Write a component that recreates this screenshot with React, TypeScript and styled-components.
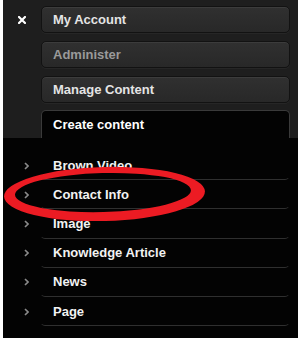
import styled, { createGlobalStyle } from "styled-components";

const GlobalStyle = createGlobalStyle`
	html, body {
		margin: 0;
		padding: 0;
		background: #ffffff;
	}
	body {
		font-family: "Liberation Sans", Arial, sans-serif;
	}
`;

const Panel = styled.div`
	position: relative;
	width: 295px;
	height: 338px;
	margin-left: 3px;
	background: #1e1e1e;
	display: flex;
	flex-direction: column;
	overflow: hidden;
`;

const Header = styled.div`
	display: grid;
	grid-template-columns: 38px 249px;
	padding-top: 6px;
`;

const CloseButton = styled.button`
	width: 38px;
	height: 27px;
	padding: 0;
	border: 0;
	background: none;
	display: flex;
	align-items: center;
	justify-content: center;
	cursor: pointer;
`;

const Menu = styled.ul`
	list-style: none;
	margin: 0;
	padding: 0;
	display: flex;
	flex-direction: column;
	gap: 8px;
`;

const MenuButton = styled.li<{ $muted?: boolean }>`
	box-sizing: border-box;
	height: 27px;
	display: flex;
	align-items: center;
	padding-left: 11px;
	border: 1px solid #121212;
	border-radius: 5px;
	background: linear-gradient(#303030, #282828);
	box-shadow: inset 0 1px 0 rgba(255, 255, 255, 0.06), 0 1px 0 rgba(255, 255, 255, 0.04);
	color: ${(p) => (p.$muted ? "#9a9a9a" : "#e4e4e4")};
	font-size: 13px;
	font-weight: bold;
`;

const ActiveTab = styled.li`
	box-sizing: border-box;
	height: 28px;
	margin-top: -1px;
	display: flex;
	align-items: center;
	padding-left: 11px;
	border: 1px solid #3a3a3a;
	border-bottom: 0;
	border-radius: 5px 5px 0 0;
	background: #030303;
	color: #ffffff;
	font-size: 13px;
	font-weight: bold;
`;

const Body = styled.div`
	flex: 1;
	background: #030303;
	padding: 13px 0 0 0;
`;

const TypeList = styled.ul`
	list-style: none;
	margin: 0;
	padding: 0;
`;

const TypeRow = styled.li`
	display: grid;
	grid-template-columns: 37px 250px;
	height: 29.2px;
	align-items: center;
`;

const Chevron = styled.span`
	display: flex;
	justify-content: flex-end;
	padding-right: 11px;
`;

const TypeLink = styled.a`
	box-sizing: border-box;
	height: 100%;
	display: flex;
	align-items: center;
	padding-left: 12px;
	border: 1px solid transparent;
	border-top: 0;
	border-bottom-color: #2f2f2f;
	border-radius: 0 0 5px 5px;
	color: #f2f2f2;
	font-size: 13px;
	font-weight: bold;
	text-decoration: none;
`;

const Highlight = styled.svg`
	position: absolute;
	left: 0;
	top: 160px;
	pointer-events: none;
`;

const types = ["Brown Video", "Contact Info", "Image", "Knowledge Article", "News", "Page"];

function App() {
	return (
		<>
			<GlobalStyle />
			<Panel>
				<Header>
					<CloseButton aria-label="Close">
						<svg width="8" height="8" viewBox="0 0 8 8">
							<path d="M1 1 L7 7 M7 1 L1 7" stroke="#fff" strokeWidth="2.2" strokeLinecap="square" />
						</svg>
					</CloseButton>
					<Menu>
						<MenuButton>My Account</MenuButton>
						<MenuButton $muted>Administer</MenuButton>
						<MenuButton>Manage Content</MenuButton>
						<ActiveTab>Create content</ActiveTab>
					</Menu>
				</Header>
				<Body>
					<TypeList>
						{types.map((t) => (
							<TypeRow key={t}>
								<Chevron>
									<svg width="5" height="8" viewBox="0 0 5 8">
										<path d="M1 1 L4 4 L1 7" fill="none" stroke="#8a8a8a" strokeWidth="1.6" />
									</svg>
								</Chevron>
								<TypeLink href="#">{t}</TypeLink>
							</TypeRow>
						))}
					</TypeList>
				</Body>
				<Highlight width="212" height="66" viewBox="0 0 212 66">
					<g transform="rotate(-1.5 101 34)">
						<path
							fillRule="evenodd"
							fill="#ec1b23"
							d="M1 34 A100.5 27 0 1 0 202 34 A100.5 27 0 1 0 1 34 Z M12 32.5 A88 19.5 0 1 0 188 32.5 A88 19.5 0 1 0 12 32.5 Z"
						/>
					</g>
				</Highlight>
			</Panel>
		</>
	);
}

export default App;
